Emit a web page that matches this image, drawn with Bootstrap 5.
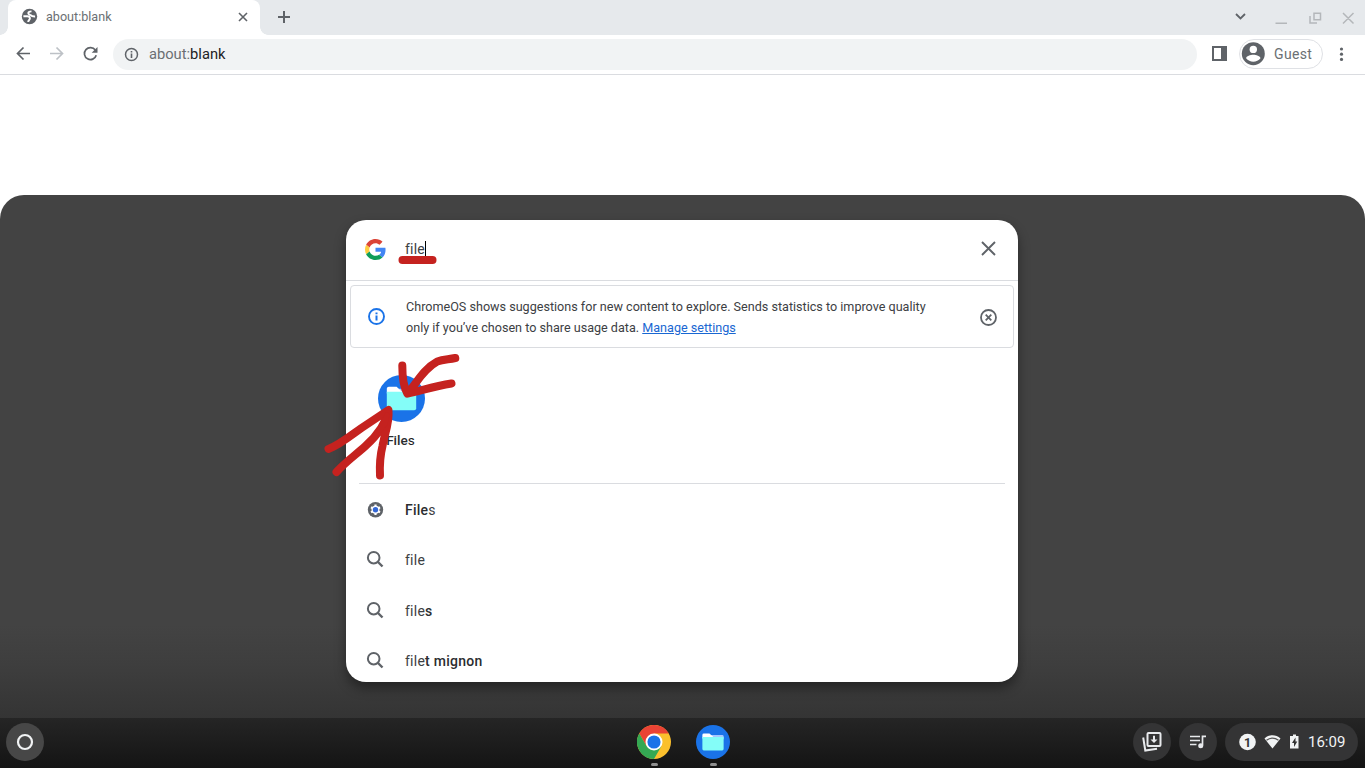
<!DOCTYPE html>
<html lang="en">
<head>
<meta charset="utf-8">
<title>about:blank</title>
<meta name="viewport" content="width=device-width, initial-scale=1">
<link href="https://cdn.jsdelivr.net/npm/bootstrap@5.3.0/dist/css/bootstrap.min.css" rel="stylesheet">
<style>
  body { width: 1365px; height: 768px; font-family: Roboto, "Liberation Sans", sans-serif; color: #202124; background: #fff; font-size: 14px; line-height: 20px; }
  svg { display: block; flex: none; }
  .tabstrip { height: 35px; background: #e6e9ec; padding-left: 8px; }
  .browser-tab { width: 252px; height: 35px; background: #fff; border-radius: 8px 8px 0 0; padding: 0 11px 2px 13px; color: #6b6f73; font-size: 12.6px; }
  .browser-tab::before, .browser-tab::after { content: ""; position: absolute; bottom: 0; width: 8px; height: 8px; }
  .browser-tab::before { left: -8px; background: radial-gradient(circle at 0 0, transparent 7.5px, #fff 8px); }
  .browser-tab::after { right: -8px; background: radial-gradient(circle at 100% 0, transparent 7.5px, #fff 8px); }
  .toolbar { height: 40px; border-bottom: 1px solid #dadce0; padding: 0 15px 1px; }
  .omnibox { width: 1084px; height: 31px; background: #f1f3f4; border-radius: 16px; padding-left: 11px; margin-left: 14px; color: #6b6f73; font-size: 14.7px; }
  .omnibox b { font-weight: 400; color: #202124; }
  .profile { width: 84px; height: 30px; border: 1px solid #dfe1e5; border-radius: 15px; color: #6b6f73; margin-left: 12px; padding-left: 1px; font-size: 14px; letter-spacing: .35px; }
  .page { height: 120px; }
  .launcher { height: 523px; background: linear-gradient(#434343 0, #434343 430px, #3e3e3e 470px, #343434 523px); border-radius: 24px 24px 0 0; padding-top: 25px; }
  .bubble { width: 672px; height: 462px; background: #fff; border-radius: 20px; box-shadow: 0 6px 12px rgba(0,0,0,.4); }
  .search-row { height: 61px; border-bottom: 1px solid #dadce0; padding: 0 19px 3px 19px; }
  .caret { width: 1px; height: 16px; background: #000; }
  .notice { height: 63px; margin: 4px 4px 0; border: 1px solid #dadce0; border-radius: 4px; padding: 0 16px 0 17px; font-size: 12.6px; line-height: 21px; color: #3c4043; }
  .notice a { color: #1967d2; }
  .app-results { height: 136px; padding: 27px 0 0 32px; border-bottom: 1px solid #dadce0; margin: 0 13px 0 13px; }
  .app-tile { width: 47px; margin-left: -13px; font-size: 13.6px; }
  .result { height: 50.4px; padding-left: 20px; color: #3c4043; font-size: 14px; letter-spacing: .25px; }
  .result svg { width: 20px; }
  .fw-mid { font-weight: 500; color: #2b2d30; }
  .shelf { height: 50px; background: linear-gradient(#252525, #141414); padding: 0 7px 2px 6px; }
  .shelf-btn { width: 38px; height: 38px; border-radius: 50%; background: #343435; }
  .shelf-btn.home { background: #474747; }
  .status { width: 133px; height: 38px; border-radius: 19px; background: #343435; color: #f1f3f4; font-size: 15px; padding-left: 14px; }
  .shelf-app { width: 36px; padding-top: 7px; }
  .shelf-app i { width: 7px; height: 3px; border-radius: 2px; background: #909090; margin-top: 4px; }
  .ink { left: 0; top: 0; pointer-events: none; }
</style>
</head>
<body class="d-flex flex-column overflow-hidden position-relative">

<svg width="0" height="0" class="position-absolute">
  <defs>
    <symbol id="folder" viewBox="0 0 48 48">
      <circle cx="24" cy="24" r="24" fill="#1a73e8"/>
      <path d="M20 14h17a2 2 0 0 1 2 2v4H20z" fill="#a6c8ff"/>
      <path d="M9 14a2 2 0 0 1 2-2h8l5.500 5v2H9z" fill="#fff"/>
      <path d="M9 17h30V34a2 2 0 0 1-2 2H11a2 2 0 0 1-2-2z" fill="#84fdf8"/>
    </symbol>
    <symbol id="magnifier" viewBox="0 0 20 20">
      <circle cx="7.700" cy="7.700" r="5.800" fill="none" stroke="#5f6368" stroke-width="2"/>
      <path d="M12 12l4.500 4.500" stroke="#5f6368" stroke-width="2.400"/>
    </symbol>
  </defs>
</svg>

<!-- Tab strip -->
<header class="tabstrip d-flex align-items-center flex-shrink-0">
  <div class="browser-tab position-relative d-flex align-items-center">
    <svg width="17" height="17" viewBox="0 0 17 17"><circle cx="8.500" cy="8.500" r="7.700" fill="#5f6368"/><path d="M2.400 8.200h3.800c1.700 0 2.700.9 2.700 2.300 0 1.500-1.700 1.500-1.700 3.500M10.500 3.400C8.700 3.400 7.300 4 7.300 5.300c0 1.400 1.600 1 2.400 1.900.8 1 1.800 1.400 4.400 1.300" fill="none" stroke="#fff" stroke-width="1.900"/></svg>
    <span class="ms-2">about:blank</span>
    <svg class="ms-auto" width="12" height="12" viewBox="0 0 12 12"><path d="M2 2l8 8M10 2l-8 8" stroke="#5f6368" stroke-width="1.600"/></svg>
  </div>
  <svg style="margin:-2px 0 0 17px" width="14" height="14" viewBox="0 0 14 14"><path d="M7 1v12M1 7h12" stroke="#5f6368" stroke-width="2"/></svg>
  <svg class="ms-auto" width="130" height="35" viewBox="1235 0 130 35" fill="none">
    <path d="M1236 14l4.500 4.500 4.500-4.500" stroke="#5f6368" stroke-width="1.800"/>
    <g stroke="#b4b7ba" stroke-width="1.500"><path d="M1275.500 23.300h11.500M1314 13.200h6.500v6.500h-6.500zM1310 16v7h7M1343 13l10.500 10.500M1353.500 13L1343 23.500"/></g>
  </svg>
</header>

<!-- Toolbar -->
<nav class="toolbar d-flex align-items-center flex-shrink-0">
  <svg width="84" height="18" viewBox="15 45 84 18" fill="none" stroke="#5f6368" stroke-width="1.700">
    <path d="M30 53.500H18M23.500 47.500l-6 6 6 6"/>
    <path d="M50 53.500h12M56.500 47.500l6 6-6 6" stroke="#bdc1c6"/>
    <path d="M95.300 50.100a6 6 0 1 0 .9 5.100"/><path d="M97.500 47v5.800h-5.800z" fill="#5f6368" stroke="none"/>
  </svg>
  <div class="omnibox d-flex align-items-center">
    <svg width="15" height="15" viewBox="0 0 15 15"><circle cx="7.500" cy="7.500" r="6" fill="none" stroke="#5f6368" stroke-width="1.500"/><path d="M7.500 6.500V11M7.500 4v1.500" stroke="#5f6368" stroke-width="1.600"/></svg>
    <span style="margin-left:10px">about:<b>blank</b></span>
  </div>
  <svg style="margin-left:15px;margin-top:-1px" width="15" height="15" viewBox="0 0 15 15"><path d="M0 0h15v15H0zM2 2v11h7V2z" fill="#5f6368" fill-rule="evenodd"/></svg>
  <div class="profile d-flex align-items-center">
    <svg width="24" height="24" viewBox="0 0 24 24"><circle cx="12.300" cy="11.700" r="11.500" fill="#5f6368"/><circle cx="12.300" cy="7.400" r="3.700" fill="#fff"/><path d="M5.100 16.200c0-2.300 4.500-3.500 7.200-3.500s7.200 1.200 7.200 3.500c-3.500 4.600-10.900 4.600-14.400 0z" fill="#fff"/></svg>
    <span style="margin-left:9px">Guest</span>
  </div>
  <svg style="margin-left:16px" width="5" height="15" viewBox="0 0 5 15" fill="#5f6368"><circle cx="2.500" cy="2" r="1.600"/><circle cx="2.500" cy="7.200" r="1.600"/><circle cx="2.500" cy="12.400" r="1.600"/></svg>
</nav>

<div class="page flex-shrink-0"></div>

<!-- Launcher -->
<main class="launcher flex-shrink-0 d-flex justify-content-center" style="padding-right:1px">
  <section class="bubble overflow-hidden">
    <div class="search-row d-flex align-items-center">
      <svg style="margin-top:2px" width="21" height="21" viewBox="0 0 48 48"><path fill="#db4437" d="M24 9.500c3.540 0 6.710 1.220 9.210 3.600l6.850-6.850C35.900 2.380 30.470 0 24 0 14.620 0 6.510 5.380 2.560 13.220l7.980 6.190C12.430 13.720 17.740 9.500 24 9.500z"/><path fill="#4285f4" d="M46.980 24.550c0-1.570-.15-3.090-.38-4.550H24v9.020h12.940c-.58 2.960-2.260 5.480-4.780 7.180l7.730 6c4.510-4.180 7.090-10.360 7.090-17.650z"/><path fill="#ffcd40" d="M10.530 28.590c-.48-1.450-.76-2.990-.76-4.590s.27-3.140.76-4.590l-7.980-6.190C.92 16.460 0 20.120 0 24c0 3.880.92 7.540 2.560 10.780l7.970-6.190z"/><path fill="#0f9d58" d="M24 48c6.480 0 11.930-2.130 15.890-5.810l-7.730-6c-2.150 1.450-4.920 2.300-8.160 2.300-6.260 0-11.570-4.220-13.470-9.910l-7.980 6.190C6.510 42.620 14.620 48 24 48z"/></svg>
      <span style="margin-left:19px;color:#3c4043;letter-spacing:.2px">file</span><span class="caret"></span>
      <svg class="ms-auto" style="margin-right:2px" width="17" height="17" viewBox="0 0 17 17"><path d="M2 2l13 13M15 2L2 15" stroke="#5f6368" stroke-width="1.900"/></svg>
    </div>
    <div class="notice d-flex align-items-center">
      <svg width="17" height="17" viewBox="0 0 17 17"><circle cx="8.500" cy="8.500" r="7.500" fill="none" stroke="#1a73e8" stroke-width="1.900"/><path d="M8.500 7.600v5M8.500 4.500v1.800" stroke="#1a73e8" stroke-width="2"/></svg>
      <div style="margin-left:21px">ChromeOS shows suggestions for new content to explore. Sends statistics to improve quality<br>only if you’ve chosen to share usage data. <a href="#">Manage settings</a></div>
      <svg class="ms-auto" style="margin-top:2px" width="17" height="17" viewBox="0 0 17 17"><circle cx="8.500" cy="8.500" r="7.500" fill="none" stroke="#5f6368" stroke-width="1.800"/><path d="M5.700 5.700l5.600 5.600M11.300 5.700l-5.600 5.600" stroke="#5f6368" stroke-width="1.800"/></svg>
    </div>
    <div class="app-results">
      <div class="app-tile d-flex flex-column align-items-center">
        <svg width="47" height="47"><use href="#folder"/></svg>
        <span style="margin:8px 0 0 -2px"><span class="fw-mid">File</span>s</span>
      </div>
    </div>
    <div class="result d-flex align-items-center" style="height:51px">
      <svg height="20" viewBox="0 0 20 20"><circle cx="9.500" cy="9.800" r="7.700" fill="#5f6368"/><circle cx="9.500" cy="9.800" r="4" fill="#fff"/><g stroke="#fff" stroke-width="2.200"><path d="M9.500 4.600v10.400M5 7.200l9 5.200M5 12.400l9-5.200"/></g><circle cx="9.500" cy="9.800" r="2.700" fill="#3367d6"/></svg>
      <span style="margin-left:19px"><span class="fw-mid">File</span>s</span>
    </div>
    <div class="result d-flex align-items-center"><svg height="20"><use href="#magnifier"/></svg><span style="margin-left:19px">file</span></div>
    <div class="result d-flex align-items-center"><svg height="20"><use href="#magnifier"/></svg><span style="margin-left:19px">file<span class="fw-mid">s</span></span></div>
    <div class="result d-flex align-items-center"><svg height="20"><use href="#magnifier"/></svg><span style="margin-left:19px">file<span class="fw-mid">t mignon</span></span></div>
  </section>
</main>

<!-- Shelf -->
<footer class="shelf d-flex align-items-center flex-shrink-0">
  <div class="shelf-btn home d-flex align-items-center justify-content-center"><svg width="18" height="18"><circle cx="9" cy="9" r="7" fill="none" stroke="#f1f3f4" stroke-width="2.200"/></svg></div>
  <div class="d-flex align-self-start" style="margin-left:592px;gap:23px">
    <div class="shelf-app d-flex flex-column align-items-center">
      <svg width="34" height="34" viewBox="0 0 48 48"><circle cx="24" cy="24" r="24" fill="#fbc02d"/><path d="M3.200 12A24 24 0 0 1 44.800 12H24L13.600 30z" fill="#ea4335"/><path d="M3.200 12A24 24 0 0 0 24 48L34.400 30 24 34 13.600 30z" fill="#34a853"/><circle cx="24" cy="24" r="12" fill="#fff"/><circle cx="24" cy="24" r="9.300" fill="#1a73e8"/></svg>
      <i></i>
    </div>
    <div class="shelf-app d-flex flex-column align-items-center"><svg width="34" height="34"><use href="#folder"/></svg><i></i></div>
  </div>
  <div class="shelf-btn ms-auto d-flex align-items-center justify-content-center">
    <svg width="22" height="22" viewBox="0 0 22 22" fill="none" stroke="#e8eaed" stroke-width="2"><rect x="6.500" y="2" width="13" height="13" rx="1"/><path d="M2.200 6.500L4.300 19.500 16 17.800M13 4.800v5"/><path d="M9.500 8.500h7L13 12z" fill="#e8eaed" stroke="none"/></svg>
  </div>
  <div class="shelf-btn d-flex align-items-center justify-content-center" style="margin-left:8px">
    <svg width="18" height="16" viewBox="0 0 18 16" fill="none" stroke="#e8eaed" stroke-width="1.700"><path d="M1 2.500h10M1 6.500h10M1 10.500h6.500M13.500 11.500V2.300H17"/><circle cx="11.700" cy="11.700" r="2.500" fill="#e8eaed" stroke="none"/></svg>
  </div>
  <div class="status d-flex align-items-center" style="margin-left:8px">
    <svg width="62" height="18" viewBox="1239 733 62 18"><circle cx="1247.500" cy="742" r="8.300" fill="#f1f3f4"/><path d="M1264.500 738.500c4.600-4.200 11.400-4.200 16 0l-8 10z" fill="#f1f3f4"/><path d="M1266.500 740.300c3.700-2.800 8.300-2.800 12 0" fill="none" stroke="#555" stroke-width="1.200"/><path d="M1291 736h2v-1.500h3v1.500h2.500v12.500H1290V736z" fill="#f1f3f4"/><path d="M1295.500 737.500l-3.500 5.500h2v4l3.300-5.500h-1.800z" fill="#333"/><text x="1247.600" y="746.500" text-anchor="middle" font-size="12.500" font-weight="700" fill="#343435">1</text></svg>
    <span style="margin-left:7px">16:09</span>
  </div>
</footer>

<!-- Hand-drawn annotation strokes -->
<svg class="ink position-absolute" width="1365" height="768" fill="none" stroke="#c5221f" stroke-width="8" stroke-linecap="round" stroke-linejoin="round">
  <path d="M402.500 260h30"/>
  <path d="M402.300 365.500c0 10 1 21 5 28 8-8 15-24 30-32 6-2 11-2 18-3.500M407.500 393.500c14-3 26-7 44-10"/>
  <path d="M328.500 449c11-4 23-14 33-21 9-6 18-12 27-18-3 16-13 27-23 36-10 9-20 16-29 26M388.500 411c1 12-4 23-6 35-3 12-3 19-2.500 29.500"/>
  <path d="M387 415l-7 15 5-6z" stroke-width="5" fill="#c5221f"/>
</svg>

<script src="https://cdn.jsdelivr.net/npm/bootstrap@5.3.0/dist/js/bootstrap.bundle.min.js"></script>
</body>
</html>
